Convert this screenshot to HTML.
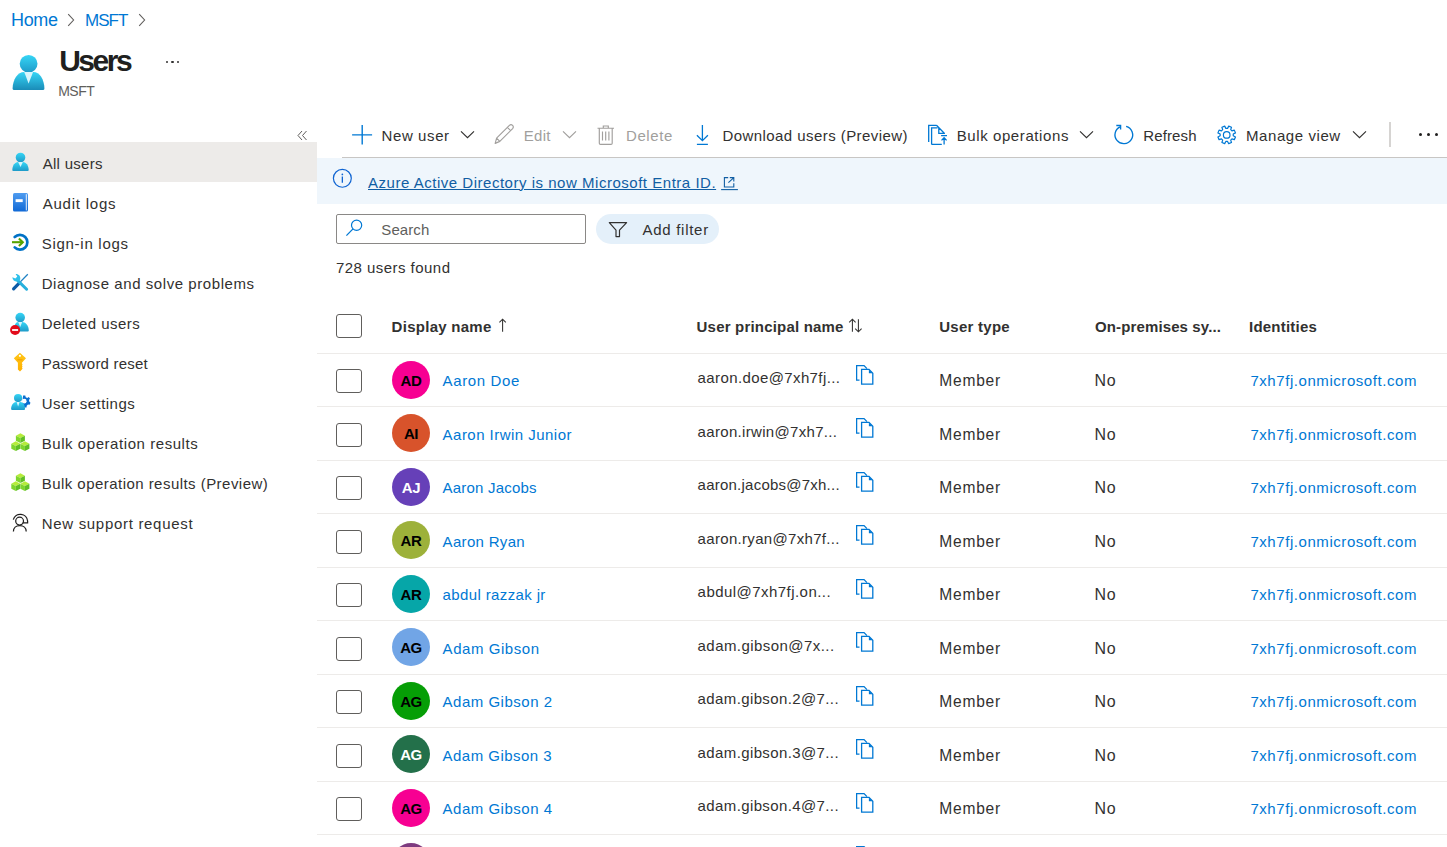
<!DOCTYPE html>
<html><head><meta charset="utf-8"><title>Users - Microsoft Entra</title>
<style>
html,body{margin:0;padding:0;background:#fff;width:1447px;height:847px;overflow:hidden;position:relative;font-family:"Liberation Sans",sans-serif}
.t{position:absolute;white-space:nowrap}
.a{position:absolute}
.dot{position:absolute;width:2.2px;height:2.2px;border-radius:50%;background:#323130}
.dot3{position:absolute;width:3px;height:3px;border-radius:50%;background:#201f1e}
.cb{position:absolute;width:26px;height:24px;box-sizing:border-box;border:1.4px solid #605e5c;border-radius:3px;background:#fff}
.av{position:absolute;width:38px;height:38px;border-radius:50%;font-size:15px;font-weight:700;line-height:39px;text-align:center;letter-spacing:-0.4px}
</style></head><body>
<svg class="a" style="left:62px;top:12px" width="16" height="16" viewBox="0 0 16 16"><path d="M6.2 2.2 L11.6 8 L6.2 13.8" fill="none" stroke="#605e5c" stroke-width="1.1"/></svg>
<svg class="a" style="left:133px;top:12px" width="16" height="16" viewBox="0 0 16 16"><path d="M6.2 2.2 L11.6 8 L6.2 13.8" fill="none" stroke="#605e5c" stroke-width="1.1"/></svg>
<svg class="a" style="left:10px;top:52px" width="38.00" height="40.00" viewBox="0 0 38 40">
<defs><linearGradient id="uAa" x1="0" y1="0" x2="0" y2="1"><stop offset="0" stop-color="#36d6f6"/><stop offset="1" stop-color="#1e9ac8"/></linearGradient>
<linearGradient id="uAb" x1="0" y1="0" x2="0" y2="1"><stop offset="0" stop-color="#36d6f6"/><stop offset="1" stop-color="#1a8cb8"/></linearGradient></defs>
<circle cx="18.6" cy="11.8" r="8.9" fill="url(#uAa)"/>
<path d="M2.6 36.8 C2.6 27 8 20 14 19.9 L23.4 19.9 C29.4 20 34.4 27 34.4 36.8 Q34.4 37.9 33.3 37.9 L3.7 37.9 Q2.6 37.9 2.6 36.8 Z" fill="url(#uAb)"/>
<path d="M14.2 20 L23.1 20 L18.6 31.4 Z" fill="#d8f6fd"/>
</svg>
<div class="a" style="left:0;top:0"><i class="dot" style="left:165.8px;top:61.3px"></i><i class="dot" style="left:171.4px;top:61.3px"></i><i class="dot" style="left:177.1px;top:61.3px"></i></div>
<svg class="a" style="left:294px;top:128px" width="16" height="16" viewBox="0 0 16 16"><path d="M8 3 L4 7.5 L8 12 M12.5 3 L8.5 7.5 L12.5 12" fill="none" stroke="#605e5c" stroke-width="1"/></svg>
<div class="a" style="left:0;top:142px;width:317px;height:40px;background:#edebe9"></div>
<svg class="a" style="left:11px;top:152px" width="19" height="20" viewBox="0 0 38 40"><defs><linearGradient id="s0a" x1="0" y1="0" x2="0" y2="1"><stop offset="0" stop-color="#36d6f6"/><stop offset="1" stop-color="#1e9ac8"/></linearGradient></defs><circle cx="19" cy="11" r="9.6" fill="url(#s0a)"/><path d="M2.6 36.2 C2.6 27 8 20 14 19.9 L24 19.9 C30 20 35.4 27 35.4 36.2 Q35.4 38 33.6 38 L4.4 38 Q2.6 38 2.6 36.2 Z" fill="url(#s0a)"/><path d="M14.2 20 L23.8 20 L19 30 Z" fill="#d8f6fd"/></svg>
<svg class="a" style="left:8px;top:188px" width="28" height="28" viewBox="0 0 28 28"><defs><linearGradient id="bk" x1="0" y1="0" x2="0" y2="1"><stop offset="0" stop-color="#4f9cf0"/><stop offset="1" stop-color="#1069d6"/></linearGradient></defs><rect x="5" y="5" width="15" height="18.5" rx="1.6" fill="url(#bk)"/><path d="M18.3 6.2 L18.3 22.4" stroke="#fff" stroke-width="0.9"/><rect x="7.6" y="11.2" width="7.1" height="2.9" fill="#fff"/></svg>
<svg class="a" style="left:8px;top:228px" width="28" height="28" viewBox="0 0 28 28"><path d="M6.7 9.0 A7.4 7.4 0 1 1 6.7 19.4" fill="none" stroke="#0072c6" stroke-width="2.7" stroke-linecap="round"/><path d="M4 14.2 L15 14.2" stroke="#57a300" stroke-width="2.1"/><path d="M10.9 10.4 L14.8 14.2 L10.9 18" fill="none" stroke="#57a300" stroke-width="2.1"/></svg>
<svg class="a" style="left:8px;top:268px" width="28" height="28" viewBox="0 0 28 28"><path d="M19.8 6.2 L10.6 15.6" stroke="#1f82c4" stroke-width="1.3"/><path d="M11.2 15.2 L5.6 20.9" stroke="#0b5aa6" stroke-width="3.2" stroke-linecap="round"/><path d="M9.8 12.6 L18.6 21.2" stroke="#27b0dd" stroke-width="3" stroke-linecap="round"/><path d="M4.3 9.2 C4.6 12.6 7.5 14 10.6 13.2 L12.2 11.6 C12.8 8.5 11 6 7.6 6.1 L9.3 8.6 L7.4 10.6 Z" fill="#2ec0ea"/></svg>
<svg class="a" style="left:8px;top:308px" width="28" height="28" viewBox="0 0 28 28"><defs><linearGradient id="du" x1="0" y1="0" x2="0" y2="1"><stop offset="0" stop-color="#36d6f6"/><stop offset="1" stop-color="#1e9ac8"/></linearGradient></defs><circle cx="12.2" cy="9.6" r="4.8" fill="url(#du)"/><path d="M5.8 22.6 C5.8 17 8 14 10 13.9 L14.4 13.9 C17 14 20.8 17 20.8 22.6 Q20.8 23.6 19.8 23.6 L6.8 23.6 Q5.8 23.6 5.8 22.6 Z" fill="url(#du)"/><path d="M10.2 14 L14.2 14 L12.2 19 Z" fill="#d8f6fd"/><circle cx="7.1" cy="22" r="5" fill="#e20b1b"/><rect x="4.1" y="21.1" width="6" height="1.8" fill="#fff"/></svg>
<svg class="a" style="left:8px;top:348px" width="28" height="28" viewBox="0 0 28 28"><defs><linearGradient id="ky" x1="0" y1="0" x2="0" y2="1"><stop offset="0" stop-color="#ffc61a"/><stop offset="1" stop-color="#ffb000"/></linearGradient></defs><path d="M11.9 4.8 L18 10.2 L13.9 14.8 L13.9 15.5 L14.6 16.3 L13.9 17.2 L14.6 18.2 L13.9 19.2 L14.6 20.2 L13.9 21.4 L12 23.5 L9.9 21.6 L9.9 14.8 L5.8 10.2 Z" fill="url(#ky)"/><circle cx="11.9" cy="7.8" r="1.1" fill="#fff"/><rect x="9.3" y="11.1" width="5.2" height="1.3" fill="#f7a600"/></svg>
<svg class="a" style="left:8px;top:388px" width="28" height="28" viewBox="0 0 28 28"><defs><linearGradient id="us" x1="0" y1="0" x2="0" y2="1"><stop offset="0" stop-color="#36d6f6"/><stop offset="1" stop-color="#1e9ac8"/></linearGradient></defs><g transform="translate(16.2 13.2)"><path d="M-1.1 -5.6 L1.1 -5.6 L1.5 -4 L3.1 -3.3 L4.5 -4.2 L5.8 -2.6 L4.8 -1.2 L5.2 0.6 L6.3 1.6 L5.4 3.6 L3.8 3.4 L2.5 4.6 L2.3 6.2 L0.1 6.4 L-0.6 4.9 L-2.3 4.4 Z" fill="#0a6fd0"/></g><circle cx="16.2" cy="13.2" r="2.4" fill="#fff"/><circle cx="10.1" cy="10.1" r="4.1" fill="url(#us)"/><path d="M3.1 21 C3.1 16.6 5.6 14 8 13.9 L12.4 13.9 C15 14 17 16.6 17 21 Q17 22 16 22 L4.1 22 Q3.1 22 3.1 21 Z" fill="url(#us)"/><path d="M8.6 14 L11.6 14 L10.1 18.6 Z" fill="#d8f6fd"/></svg>
<svg class="a" style="left:8px;top:428px" width="28" height="28" viewBox="0 0 28 28"><path d="M7.9 7.699999999999999 L12.4 5.3 L16.9 7.699999999999999 L12.4 10.1 Z" fill="#b5ec3a"/><path d="M7.9 7.699999999999999 L12.4 10.1 L12.4 15.100000000000001 L7.9 12.7 Z" fill="#7fd52c"/><path d="M16.9 7.699999999999999 L12.4 10.1 L12.4 15.100000000000001 L16.9 12.7 Z" fill="#5fbf24"/><path d="M3.3 15.700000000000001 L7.8 13.3 L12.3 15.700000000000001 L7.8 18.1 Z" fill="#b5ec3a"/><path d="M3.3 15.700000000000001 L7.8 18.1 L7.8 23.1 L3.3 20.700000000000003 Z" fill="#7fd52c"/><path d="M12.3 15.700000000000001 L7.8 18.1 L7.8 23.1 L12.3 20.700000000000003 Z" fill="#5fbf24"/><path d="M12.4 15.700000000000001 L16.9 13.3 L21.4 15.700000000000001 L16.9 18.1 Z" fill="#b5ec3a"/><path d="M12.4 15.700000000000001 L16.9 18.1 L16.9 23.1 L12.4 20.700000000000003 Z" fill="#7fd52c"/><path d="M21.4 15.700000000000001 L16.9 18.1 L16.9 23.1 L21.4 20.700000000000003 Z" fill="#5fbf24"/></svg>
<svg class="a" style="left:8px;top:468px" width="28" height="28" viewBox="0 0 28 28"><path d="M7.9 7.699999999999999 L12.4 5.3 L16.9 7.699999999999999 L12.4 10.1 Z" fill="#b5ec3a"/><path d="M7.9 7.699999999999999 L12.4 10.1 L12.4 15.100000000000001 L7.9 12.7 Z" fill="#7fd52c"/><path d="M16.9 7.699999999999999 L12.4 10.1 L12.4 15.100000000000001 L16.9 12.7 Z" fill="#5fbf24"/><path d="M3.3 15.700000000000001 L7.8 13.3 L12.3 15.700000000000001 L7.8 18.1 Z" fill="#b5ec3a"/><path d="M3.3 15.700000000000001 L7.8 18.1 L7.8 23.1 L3.3 20.700000000000003 Z" fill="#7fd52c"/><path d="M12.3 15.700000000000001 L7.8 18.1 L7.8 23.1 L12.3 20.700000000000003 Z" fill="#5fbf24"/><path d="M12.4 15.700000000000001 L16.9 13.3 L21.4 15.700000000000001 L16.9 18.1 Z" fill="#b5ec3a"/><path d="M12.4 15.700000000000001 L16.9 18.1 L16.9 23.1 L12.4 20.700000000000003 Z" fill="#7fd52c"/><path d="M21.4 15.700000000000001 L16.9 18.1 L16.9 23.1 L21.4 20.700000000000003 Z" fill="#5fbf24"/></svg>
<svg class="a" style="left:8px;top:508px" width="28" height="28" viewBox="0 0 28 28"><circle cx="11.6" cy="13.1" r="3.9" fill="none" stroke="#201f1e" stroke-width="1.25"/><path d="M5.3 11.6 A7.3 7.3 0 0 1 19.6 13.0 L19.6 14.9 L14.6 14.9" fill="none" stroke="#201f1e" stroke-width="1.25"/><path d="M5.4 23.6 C5.4 20 8 17.6 11.8 17.6 C15.6 17.6 18.2 20 18.2 23.4" fill="none" stroke="#201f1e" stroke-width="1.25"/></svg>
<div class="a" style="left:342px;top:157px;width:1105px;height:1px;background:#c8c6c4"></div>
<svg class="a" style="left:348px;top:120px" width="30" height="30" viewBox="0 0 30 30"><path d="M14.2 5.1 L14.2 24.6 M4.1 14.9 L24.1 14.9" stroke="#0078d4" stroke-width="1.4"/></svg>
<svg class="a" style="left:459.5px;top:120px" width="16" height="30" viewBox="0 0 16 30"><path d="M1 1.3 L7.5 7.6 L14 1.3" transform="translate(0 10.1)" fill="none" stroke="#323130" stroke-width="1.15"/></svg>
<svg class="a" style="left:488px;top:120px" width="30" height="30" viewBox="0 0 30 30"><path d="M7.2 23.4 L8.6 18.2 L21.4 5.4 Q23 4 24.6 5.4 Q26 7 24.6 8.6 L11.8 21.4 Z M8.6 18.2 L11.8 21.4 M19.4 7.4 L22.6 10.6" fill="none" stroke="#a19f9d" stroke-width="1.15" stroke-linejoin="round"/></svg>
<svg class="a" style="left:561.5px;top:120px" width="16" height="30" viewBox="0 0 16 30"><path d="M1 1.3 L7.5 7.6 L14 1.3" transform="translate(0 10.1)" fill="none" stroke="#a19f9d" stroke-width="1.15"/></svg>
<svg class="a" style="left:590px;top:120px" width="30" height="30" viewBox="0 0 30 30"><path d="M7.5 8.2 L24 8.2 M13.3 8 L13.3 6 L18.3 6 L18.3 8 M9.3 8.2 L9.3 23.2 Q9.3 24.4 10.5 24.4 L21 24.4 Q22.2 24.4 22.2 23.2 L22.2 8.2 M12.5 11.4 L12.5 20.4 M15.7 11.4 L15.7 20.4 M18.9 11.4 L18.9 20.4" fill="none" stroke="#a19f9d" stroke-width="1.15"/></svg>
<svg class="a" style="left:690px;top:120px" width="30" height="30" viewBox="0 0 30 30"><path d="M12.4 5.1 L12.4 20.2 M6.9 15.2 L12.4 20.6 L17.9 15.2 M6.9 24.4 L17.9 24.4" fill="none" stroke="#0078d4" stroke-width="1.3"/></svg>
<svg class="a" style="left:922px;top:120px" width="30" height="30" viewBox="0 0 30 30"><path d="M6.7 22 L6.7 5.3 L14.5 5.3 M9.6 24.4 L9.6 7.8 L15.5 7.8 M14.5 5.3 L22.3 13.3 L22.3 14 M16.8 8 L16.8 13.3 L22.3 13.3 M9.6 24.4 L19.8 24.4 M19.1 15.6 L25 15.6 M22.1 17.9 L22.1 24.6 M19.5 20.4 L22.1 17.8 L24.6 20.4" fill="none" stroke="#0078d4" stroke-width="1.3"/></svg>
<svg class="a" style="left:1078.5px;top:120px" width="16" height="30" viewBox="0 0 16 30"><path d="M1 1.3 L7.5 7.6 L14 1.3" transform="translate(0 10.1)" fill="none" stroke="#323130" stroke-width="1.15"/></svg>
<svg class="a" style="left:1108px;top:120px" width="30" height="30" viewBox="0 0 30 30"><path d="M18.14 6.3 A8.85 8.85 0 1 1 12.6 6.6" fill="none" stroke="#0078d4" stroke-width="1.35"/><path d="M8.3 5.5 L12.6 5.5 L12.6 9.6" fill="none" stroke="#0078d4" stroke-width="1.35"/></svg>
<svg class="a" style="left:1212px;top:120px" width="30" height="30" viewBox="0 0 30 30"><path d="M15.56 8.36 L16.71 6.13 L19.49 7.28 L18.72 9.67 L19.93 10.88 L22.32 10.11 L23.47 12.89 L21.24 14.04 L21.24 15.76 L23.47 16.91 L22.32 19.69 L19.93 18.92 L18.72 20.13 L19.49 22.52 L16.71 23.67 L15.56 21.44 L13.84 21.44 L12.69 23.67 L9.91 22.52 L10.68 20.13 L9.47 18.92 L7.08 19.69 L5.93 16.91 L8.16 15.76 L8.16 14.04 L5.93 12.89 L7.08 10.11 L9.47 10.88 L10.68 9.67 L9.91 7.28 L12.69 6.13 L13.84 8.36 Z" fill="none" stroke="#0078d4" stroke-width="1.2" stroke-linejoin="round"/><circle cx="14.7" cy="14.9" r="3.3" fill="none" stroke="#0078d4" stroke-width="1.2"/></svg>
<svg class="a" style="left:1352.3px;top:120px" width="16" height="30" viewBox="0 0 16 30"><path d="M1 1.3 L7.5 7.6 L14 1.3" transform="translate(0 10.1)" fill="none" stroke="#323130" stroke-width="1.15"/></svg>
<div class="a" style="left:1389px;top:122px;width:2px;height:25px;background:#d6d4d2"></div>
<div class="a" style="left:0;top:0"><i class="dot3" style="left:1419px;top:132.9px"></i><i class="dot3" style="left:1426.9px;top:132.9px"></i><i class="dot3" style="left:1434.8px;top:132.9px"></i></div>
<div class="a" style="left:317px;top:158px;width:1130px;height:46px;background:#eff6fc"></div>
<svg class="a" style="left:328px;top:165px" width="30" height="30" viewBox="0 0 30 30"><circle cx="14.35" cy="13.3" r="8.95" fill="none" stroke="#0f64d2" stroke-width="1.2"/><circle cx="14.35" cy="9.4" r="0.85" fill="#0f64d2"/><path d="M14.35 11.4 L14.35 17.8" stroke="#0f64d2" stroke-width="1.3"/></svg>
<svg class="a" style="left:716px;top:170px" width="28" height="28" viewBox="0 0 28 28"><path d="M12.2 7.6 L8.4 7.6 L8.4 17 L17.8 17 L17.8 13.2 M13.8 7.6 L17.8 7.6 L17.8 11.6 M12.4 12.6 L17.6 7.8" fill="none" stroke="#115ea3" stroke-width="1.1"/><path d="M5.1 19.6 L21.9 19.6" stroke="#115ea3" stroke-width="1.1"/></svg>
<div class="a" style="left:336px;top:214px;width:250px;height:30px;box-sizing:border-box;border:1px solid #8a8886;border-radius:2px;background:#fff"></div>
<svg class="a" style="left:340px;top:210px" width="30" height="30" viewBox="0 0 30 30"><circle cx="16.6" cy="15.3" r="5.1" fill="none" stroke="#0078d4" stroke-width="1.2"/><path d="M13 18.9 L6.4 25.6" stroke="#0078d4" stroke-width="1.3"/></svg>
<div class="a" style="left:596px;top:214px;width:123px;height:30px;border-radius:15px;background:#e4f0fa"></div>
<svg class="a" style="left:602px;top:215px" width="30" height="30" viewBox="0 0 30 30"><path d="M7.3 7.6 L24.6 7.6 L17.5 15.1 L17.5 21.6 L14 21.6 L14 15.1 Z" fill="none" stroke="#323130" stroke-width="1.2" stroke-linejoin="round"/></svg>
<div class="cb" style="left:336px;top:314px"></div>
<svg class="a" style="left:496px;top:316px" width="14" height="20" viewBox="0 0 14 20"><path d="M6.6 3.2 L6.6 15.8 M3.4 6.4 L6.6 3.2 L9.8 6.4" fill="none" stroke="#323130" stroke-width="1.05"/></svg>
<svg class="a" style="left:846px;top:310px" width="30" height="30" viewBox="0 0 30 30"><path d="M6.4 9.2 L6.4 21.8 M3.2 12.4 L6.4 9.2 L9.6 12.4 M12.4 9.2 L12.4 21.8 M9.2 18.6 L12.4 21.8 L15.6 18.6" fill="none" stroke="#323130" stroke-width="1.05"/></svg>
<div class="a" style="left:317px;top:353px;width:1130px;height:1px;background:#edebe9"></div>
<div class="a" style="left:317px;top:406px;width:1130px;height:1px;background:#edebe9"></div>
<div class="cb" style="left:336px;top:369.0px"></div>
<div class="av" style="left:392px;top:360.8px;background:#f70092;color:#000">AD</div>
<svg class="a" style="left:855.6px;top:365px" width="18" height="20" viewBox="0 0 18 20"><path d="M3.5 15.2 L0.6 15.2 L0.6 0.6 L8 0.6 L11 3.6" fill="none" stroke="#0078d4" stroke-width="1.3"/><path d="M5.6 4.4 L13 4.4 L16.8 8.2 L16.8 19.2 L5.6 19.2 Z" fill="none" stroke="#0078d4" stroke-width="1.3"/><path d="M12.9 4.6 L12.9 8.3 L16.6 8.3 Z" fill="#0078d4"/></svg>
<div class="a" style="left:317px;top:460px;width:1130px;height:1px;background:#edebe9"></div>
<div class="cb" style="left:336px;top:422.5px"></div>
<div class="av" style="left:392px;top:414.3px;background:#d8532b;color:#000">AI</div>
<svg class="a" style="left:855.6px;top:418px" width="18" height="20" viewBox="0 0 18 20"><path d="M3.5 15.2 L0.6 15.2 L0.6 0.6 L8 0.6 L11 3.6" fill="none" stroke="#0078d4" stroke-width="1.3"/><path d="M5.6 4.4 L13 4.4 L16.8 8.2 L16.8 19.2 L5.6 19.2 Z" fill="none" stroke="#0078d4" stroke-width="1.3"/><path d="M12.9 4.6 L12.9 8.3 L16.6 8.3 Z" fill="#0078d4"/></svg>
<div class="a" style="left:317px;top:513px;width:1130px;height:1px;background:#edebe9"></div>
<div class="cb" style="left:336px;top:476.0px"></div>
<div class="av" style="left:392px;top:467.8px;background:#6640b8;color:#fff">AJ</div>
<svg class="a" style="left:855.6px;top:472px" width="18" height="20" viewBox="0 0 18 20"><path d="M3.5 15.2 L0.6 15.2 L0.6 0.6 L8 0.6 L11 3.6" fill="none" stroke="#0078d4" stroke-width="1.3"/><path d="M5.6 4.4 L13 4.4 L16.8 8.2 L16.8 19.2 L5.6 19.2 Z" fill="none" stroke="#0078d4" stroke-width="1.3"/><path d="M12.9 4.6 L12.9 8.3 L16.6 8.3 Z" fill="#0078d4"/></svg>
<div class="a" style="left:317px;top:567px;width:1130px;height:1px;background:#edebe9"></div>
<div class="cb" style="left:336px;top:529.5px"></div>
<div class="av" style="left:392px;top:521.3px;background:#9db13a;color:#000">AR</div>
<svg class="a" style="left:855.6px;top:525px" width="18" height="20" viewBox="0 0 18 20"><path d="M3.5 15.2 L0.6 15.2 L0.6 0.6 L8 0.6 L11 3.6" fill="none" stroke="#0078d4" stroke-width="1.3"/><path d="M5.6 4.4 L13 4.4 L16.8 8.2 L16.8 19.2 L5.6 19.2 Z" fill="none" stroke="#0078d4" stroke-width="1.3"/><path d="M12.9 4.6 L12.9 8.3 L16.6 8.3 Z" fill="#0078d4"/></svg>
<div class="a" style="left:317px;top:620px;width:1130px;height:1px;background:#edebe9"></div>
<div class="cb" style="left:336px;top:583.0px"></div>
<div class="av" style="left:392px;top:574.8px;background:#06a6a8;color:#000">AR</div>
<svg class="a" style="left:855.6px;top:579px" width="18" height="20" viewBox="0 0 18 20"><path d="M3.5 15.2 L0.6 15.2 L0.6 0.6 L8 0.6 L11 3.6" fill="none" stroke="#0078d4" stroke-width="1.3"/><path d="M5.6 4.4 L13 4.4 L16.8 8.2 L16.8 19.2 L5.6 19.2 Z" fill="none" stroke="#0078d4" stroke-width="1.3"/><path d="M12.9 4.6 L12.9 8.3 L16.6 8.3 Z" fill="#0078d4"/></svg>
<div class="a" style="left:317px;top:674px;width:1130px;height:1px;background:#edebe9"></div>
<div class="cb" style="left:336px;top:636.5px"></div>
<div class="av" style="left:392px;top:628.3px;background:#71a5e6;color:#000">AG</div>
<svg class="a" style="left:855.6px;top:632px" width="18" height="20" viewBox="0 0 18 20"><path d="M3.5 15.2 L0.6 15.2 L0.6 0.6 L8 0.6 L11 3.6" fill="none" stroke="#0078d4" stroke-width="1.3"/><path d="M5.6 4.4 L13 4.4 L16.8 8.2 L16.8 19.2 L5.6 19.2 Z" fill="none" stroke="#0078d4" stroke-width="1.3"/><path d="M12.9 4.6 L12.9 8.3 L16.6 8.3 Z" fill="#0078d4"/></svg>
<div class="a" style="left:317px;top:727px;width:1130px;height:1px;background:#edebe9"></div>
<div class="cb" style="left:336px;top:690.0px"></div>
<div class="av" style="left:392px;top:681.8px;background:#069e06;color:#000">AG</div>
<svg class="a" style="left:855.6px;top:686px" width="18" height="20" viewBox="0 0 18 20"><path d="M3.5 15.2 L0.6 15.2 L0.6 0.6 L8 0.6 L11 3.6" fill="none" stroke="#0078d4" stroke-width="1.3"/><path d="M5.6 4.4 L13 4.4 L16.8 8.2 L16.8 19.2 L5.6 19.2 Z" fill="none" stroke="#0078d4" stroke-width="1.3"/><path d="M12.9 4.6 L12.9 8.3 L16.6 8.3 Z" fill="#0078d4"/></svg>
<div class="a" style="left:317px;top:781px;width:1130px;height:1px;background:#edebe9"></div>
<div class="cb" style="left:336px;top:743.5px"></div>
<div class="av" style="left:392px;top:735.3px;background:#23704a;color:#fff">AG</div>
<svg class="a" style="left:855.6px;top:739px" width="18" height="20" viewBox="0 0 18 20"><path d="M3.5 15.2 L0.6 15.2 L0.6 0.6 L8 0.6 L11 3.6" fill="none" stroke="#0078d4" stroke-width="1.3"/><path d="M5.6 4.4 L13 4.4 L16.8 8.2 L16.8 19.2 L5.6 19.2 Z" fill="none" stroke="#0078d4" stroke-width="1.3"/><path d="M12.9 4.6 L12.9 8.3 L16.6 8.3 Z" fill="#0078d4"/></svg>
<div class="a" style="left:317px;top:834px;width:1130px;height:1px;background:#edebe9"></div>
<div class="cb" style="left:336px;top:797.0px"></div>
<div class="av" style="left:392px;top:788.8px;background:#f70092;color:#000">AG</div>
<svg class="a" style="left:855.6px;top:793px" width="18" height="20" viewBox="0 0 18 20"><path d="M3.5 15.2 L0.6 15.2 L0.6 0.6 L8 0.6 L11 3.6" fill="none" stroke="#0078d4" stroke-width="1.3"/><path d="M5.6 4.4 L13 4.4 L16.8 8.2 L16.8 19.2 L5.6 19.2 Z" fill="none" stroke="#0078d4" stroke-width="1.3"/><path d="M12.9 4.6 L12.9 8.3 L16.6 8.3 Z" fill="#0078d4"/></svg>
<div class="a" style="left:317px;top:888px;width:1130px;height:1px;background:#edebe9"></div>
<div class="cb" style="left:336px;top:850.5px"></div>
<div class="av" style="left:392px;top:843.4px;background:#7e3b80;color:#fff">AG</div>
<svg class="a" style="left:855.6px;top:846px" width="18" height="20" viewBox="0 0 18 20"><path d="M3.5 15.2 L0.6 15.2 L0.6 0.6 L8 0.6 L11 3.6" fill="none" stroke="#0078d4" stroke-width="1.3"/><path d="M5.6 4.4 L13 4.4 L16.8 8.2 L16.8 19.2 L5.6 19.2 Z" fill="none" stroke="#0078d4" stroke-width="1.3"/><path d="M12.9 4.6 L12.9 8.3 L16.6 8.3 Z" fill="#0078d4"/></svg>
<div class="t" style="left:11.00px;top:8.00px;font-size:18px;line-height:25px;color:#0078d4;font-weight:400;letter-spacing:-0.333px;">Home</div>
<div class="t" style="left:85.00px;top:9.00px;font-size:17px;line-height:24px;color:#0078d4;font-weight:400;letter-spacing:-1.000px;">MSFT</div>
<div class="t" style="left:59.20px;top:40.00px;font-size:30px;line-height:42px;color:#201f1e;font-weight:700;letter-spacing:-2.500px;">Users</div>
<div class="t" style="left:58.20px;top:81.00px;font-size:14px;line-height:20px;color:#605e5c;font-weight:400;letter-spacing:-0.500px;">MSFT</div>
<div class="t" style="left:42.70px;top:153.00px;font-size:15px;line-height:21px;color:#323130;font-weight:400;letter-spacing:0.287px;">All users</div>
<div class="t" style="left:42.70px;top:193.00px;font-size:15.06px;line-height:21px;color:#323130;font-weight:400;letter-spacing:0.750px;">Audit logs</div>
<div class="t" style="left:41.70px;top:233.00px;font-size:15px;line-height:21px;color:#323130;font-weight:400;letter-spacing:0.727px;">Sign-in logs</div>
<div class="t" style="left:41.70px;top:273.00px;font-size:15px;line-height:21px;color:#323130;font-weight:400;letter-spacing:0.565px;">Diagnose and solve problems</div>
<div class="t" style="left:41.70px;top:313.00px;font-size:15px;line-height:21px;color:#323130;font-weight:400;letter-spacing:0.450px;">Deleted users</div>
<div class="t" style="left:41.70px;top:353.00px;font-size:15px;line-height:21px;color:#323130;font-weight:400;letter-spacing:0.200px;">Password reset</div>
<div class="t" style="left:41.70px;top:393.00px;font-size:15px;line-height:21px;color:#323130;font-weight:400;letter-spacing:0.458px;">User settings</div>
<div class="t" style="left:41.70px;top:433.00px;font-size:15px;line-height:21px;color:#323130;font-weight:400;letter-spacing:0.562px;">Bulk operation results</div>
<div class="t" style="left:41.70px;top:473.00px;font-size:15px;line-height:21px;color:#323130;font-weight:400;letter-spacing:0.461px;">Bulk operation results (Preview)</div>
<div class="t" style="left:41.70px;top:513.00px;font-size:15px;line-height:21px;color:#323130;font-weight:400;letter-spacing:0.694px;">New support request</div>
<div class="t" style="left:381.60px;top:125.00px;font-size:15px;line-height:21px;color:#323130;font-weight:400;letter-spacing:0.586px;">New user</div>
<div class="t" style="left:523.70px;top:125.00px;font-size:15px;line-height:21px;color:#a19f9d;font-weight:400;letter-spacing:0.300px;">Edit</div>
<div class="t" style="left:626.00px;top:125.00px;font-size:15px;line-height:21px;color:#a19f9d;font-weight:400;letter-spacing:0.600px;">Delete</div>
<div class="t" style="left:722.40px;top:125.00px;font-size:15px;line-height:21px;color:#323130;font-weight:400;letter-spacing:0.439px;">Download users (Preview)</div>
<div class="t" style="left:956.70px;top:125.00px;font-size:15px;line-height:21px;color:#323130;font-weight:400;letter-spacing:0.593px;">Bulk operations</div>
<div class="t" style="left:1143.30px;top:125.00px;font-size:15px;line-height:21px;color:#323130;font-weight:400;letter-spacing:0.117px;">Refresh</div>
<div class="t" style="left:1246.00px;top:125.00px;font-size:15px;line-height:21px;color:#323130;font-weight:400;letter-spacing:0.580px;">Manage view</div>
<div class="t" style="left:368.00px;top:172.00px;font-size:15px;line-height:21px;color:#115ea3;font-weight:400;letter-spacing:0.521px;text-decoration:underline;text-underline-offset:1px;text-decoration-thickness:1px">Azure Active Directory is now Microsoft Entra ID.</div>
<div class="t" style="left:381.30px;top:219.00px;font-size:15px;line-height:21px;color:#605e5c;font-weight:400;letter-spacing:0.080px;">Search</div>
<div class="t" style="left:642.40px;top:219.00px;font-size:15px;line-height:21px;color:#323130;font-weight:400;letter-spacing:0.733px;">Add filter</div>
<div class="t" style="left:336.00px;top:257.00px;font-size:15px;line-height:21px;color:#323130;font-weight:400;letter-spacing:0.457px;">728 users found</div>
<div class="t" style="left:391.60px;top:316.00px;font-size:15px;line-height:21px;color:#323130;font-weight:700;letter-spacing:0.273px;">Display name</div>
<div class="t" style="left:696.60px;top:316.00px;font-size:15px;line-height:21px;color:#323130;font-weight:700;letter-spacing:0.189px;">User principal name</div>
<div class="t" style="left:939.20px;top:316.00px;font-size:15px;line-height:21px;color:#323130;font-weight:700;letter-spacing:0.262px;">User type</div>
<div class="t" style="left:1095.00px;top:316.00px;font-size:15px;line-height:21px;color:#323130;font-weight:700;letter-spacing:0.125px;">On-premises sy...</div>
<div class="t" style="left:1249.00px;top:316.00px;font-size:15px;line-height:21px;color:#323130;font-weight:700;letter-spacing:0.222px;">Identities</div>
<div class="t" style="left:442.60px;top:370.00px;font-size:15px;line-height:21px;color:#0078d4;font-weight:400;letter-spacing:0.637px;">Aaron Doe</div>
<div class="t" style="left:697.60px;top:367.00px;font-size:15px;line-height:21px;color:#323130;font-weight:400;letter-spacing:0.389px;">aaron.doe@7xh7fj...</div>
<div class="t" style="left:939.36px;top:370.00px;font-size:15.57px;line-height:22px;color:#323130;font-weight:400;letter-spacing:0.750px;">Member</div>
<div class="t" style="left:1094.54px;top:370.00px;font-size:15.96px;line-height:22px;color:#323130;font-weight:400;letter-spacing:0.750px;">No</div>
<div class="t" style="left:1250.40px;top:370.00px;font-size:15px;line-height:21px;color:#0078d4;font-weight:400;letter-spacing:0.562px;">7xh7fj.onmicrosoft.com</div>
<div class="t" style="left:442.60px;top:424.00px;font-size:15px;line-height:21px;color:#0078d4;font-weight:400;letter-spacing:0.471px;">Aaron Irwin Junior</div>
<div class="t" style="left:697.60px;top:421.00px;font-size:15px;line-height:21px;color:#323130;font-weight:400;letter-spacing:0.322px;">aaron.irwin@7xh7...</div>
<div class="t" style="left:939.36px;top:424.00px;font-size:15.57px;line-height:22px;color:#323130;font-weight:400;letter-spacing:0.750px;">Member</div>
<div class="t" style="left:1094.54px;top:424.00px;font-size:15.96px;line-height:22px;color:#323130;font-weight:400;letter-spacing:0.750px;">No</div>
<div class="t" style="left:1250.40px;top:424.00px;font-size:15px;line-height:21px;color:#0078d4;font-weight:400;letter-spacing:0.562px;">7xh7fj.onmicrosoft.com</div>
<div class="t" style="left:442.60px;top:477.00px;font-size:15px;line-height:21px;color:#0078d4;font-weight:400;letter-spacing:0.200px;">Aaron Jacobs</div>
<div class="t" style="left:697.60px;top:474.00px;font-size:15px;line-height:21px;color:#323130;font-weight:400;letter-spacing:0.233px;">aaron.jacobs@7xh...</div>
<div class="t" style="left:939.36px;top:477.00px;font-size:15.57px;line-height:22px;color:#323130;font-weight:400;letter-spacing:0.750px;">Member</div>
<div class="t" style="left:1094.54px;top:477.00px;font-size:15.96px;line-height:22px;color:#323130;font-weight:400;letter-spacing:0.750px;">No</div>
<div class="t" style="left:1250.40px;top:477.00px;font-size:15px;line-height:21px;color:#0078d4;font-weight:400;letter-spacing:0.562px;">7xh7fj.onmicrosoft.com</div>
<div class="t" style="left:442.60px;top:531.00px;font-size:15px;line-height:21px;color:#0078d4;font-weight:400;letter-spacing:0.322px;">Aaron Ryan</div>
<div class="t" style="left:697.60px;top:528.00px;font-size:15px;line-height:21px;color:#323130;font-weight:400;letter-spacing:0.317px;">aaron.ryan@7xh7f...</div>
<div class="t" style="left:939.36px;top:531.00px;font-size:15.57px;line-height:22px;color:#323130;font-weight:400;letter-spacing:0.750px;">Member</div>
<div class="t" style="left:1094.54px;top:531.00px;font-size:15.96px;line-height:22px;color:#323130;font-weight:400;letter-spacing:0.750px;">No</div>
<div class="t" style="left:1250.40px;top:531.00px;font-size:15px;line-height:21px;color:#0078d4;font-weight:400;letter-spacing:0.562px;">7xh7fj.onmicrosoft.com</div>
<div class="t" style="left:442.60px;top:584.00px;font-size:15px;line-height:21px;color:#0078d4;font-weight:400;letter-spacing:0.371px;">abdul razzak jr</div>
<div class="t" style="left:697.60px;top:581.00px;font-size:15px;line-height:21px;color:#323130;font-weight:400;letter-spacing:0.453px;">abdul@7xh7fj.on...</div>
<div class="t" style="left:939.36px;top:584.00px;font-size:15.57px;line-height:22px;color:#323130;font-weight:400;letter-spacing:0.750px;">Member</div>
<div class="t" style="left:1094.54px;top:584.00px;font-size:15.96px;line-height:22px;color:#323130;font-weight:400;letter-spacing:0.750px;">No</div>
<div class="t" style="left:1250.40px;top:584.00px;font-size:15px;line-height:21px;color:#0078d4;font-weight:400;letter-spacing:0.562px;">7xh7fj.onmicrosoft.com</div>
<div class="t" style="left:442.60px;top:638.00px;font-size:15px;line-height:21px;color:#0078d4;font-weight:400;letter-spacing:0.560px;">Adam Gibson</div>
<div class="t" style="left:697.60px;top:635.00px;font-size:15px;line-height:21px;color:#323130;font-weight:400;letter-spacing:0.438px;">adam.gibson@7x...</div>
<div class="t" style="left:939.36px;top:638.00px;font-size:15.57px;line-height:22px;color:#323130;font-weight:400;letter-spacing:0.750px;">Member</div>
<div class="t" style="left:1094.54px;top:638.00px;font-size:15.96px;line-height:22px;color:#323130;font-weight:400;letter-spacing:0.750px;">No</div>
<div class="t" style="left:1250.40px;top:638.00px;font-size:15px;line-height:21px;color:#0078d4;font-weight:400;letter-spacing:0.562px;">7xh7fj.onmicrosoft.com</div>
<div class="t" style="left:442.60px;top:691.00px;font-size:15px;line-height:21px;color:#0078d4;font-weight:400;letter-spacing:0.500px;">Adam Gibson 2</div>
<div class="t" style="left:697.60px;top:688.00px;font-size:15px;line-height:21px;color:#323130;font-weight:400;letter-spacing:0.382px;">adam.gibson.2@7...</div>
<div class="t" style="left:939.36px;top:691.00px;font-size:15.57px;line-height:22px;color:#323130;font-weight:400;letter-spacing:0.750px;">Member</div>
<div class="t" style="left:1094.54px;top:691.00px;font-size:15.96px;line-height:22px;color:#323130;font-weight:400;letter-spacing:0.750px;">No</div>
<div class="t" style="left:1250.40px;top:691.00px;font-size:15px;line-height:21px;color:#0078d4;font-weight:400;letter-spacing:0.562px;">7xh7fj.onmicrosoft.com</div>
<div class="t" style="left:442.60px;top:745.00px;font-size:15px;line-height:21px;color:#0078d4;font-weight:400;letter-spacing:0.467px;">Adam Gibson 3</div>
<div class="t" style="left:697.60px;top:742.00px;font-size:15px;line-height:21px;color:#323130;font-weight:400;letter-spacing:0.382px;">adam.gibson.3@7...</div>
<div class="t" style="left:939.36px;top:745.00px;font-size:15.57px;line-height:22px;color:#323130;font-weight:400;letter-spacing:0.750px;">Member</div>
<div class="t" style="left:1094.54px;top:745.00px;font-size:15.96px;line-height:22px;color:#323130;font-weight:400;letter-spacing:0.750px;">No</div>
<div class="t" style="left:1250.40px;top:745.00px;font-size:15px;line-height:21px;color:#0078d4;font-weight:400;letter-spacing:0.562px;">7xh7fj.onmicrosoft.com</div>
<div class="t" style="left:442.60px;top:798.00px;font-size:15px;line-height:21px;color:#0078d4;font-weight:400;letter-spacing:0.500px;">Adam Gibson 4</div>
<div class="t" style="left:697.60px;top:795.00px;font-size:15px;line-height:21px;color:#323130;font-weight:400;letter-spacing:0.382px;">adam.gibson.4@7...</div>
<div class="t" style="left:939.36px;top:798.00px;font-size:15.57px;line-height:22px;color:#323130;font-weight:400;letter-spacing:0.750px;">Member</div>
<div class="t" style="left:1094.54px;top:798.00px;font-size:15.96px;line-height:22px;color:#323130;font-weight:400;letter-spacing:0.750px;">No</div>
<div class="t" style="left:1250.40px;top:798.00px;font-size:15px;line-height:21px;color:#0078d4;font-weight:400;letter-spacing:0.562px;">7xh7fj.onmicrosoft.com</div>
</body></html>
